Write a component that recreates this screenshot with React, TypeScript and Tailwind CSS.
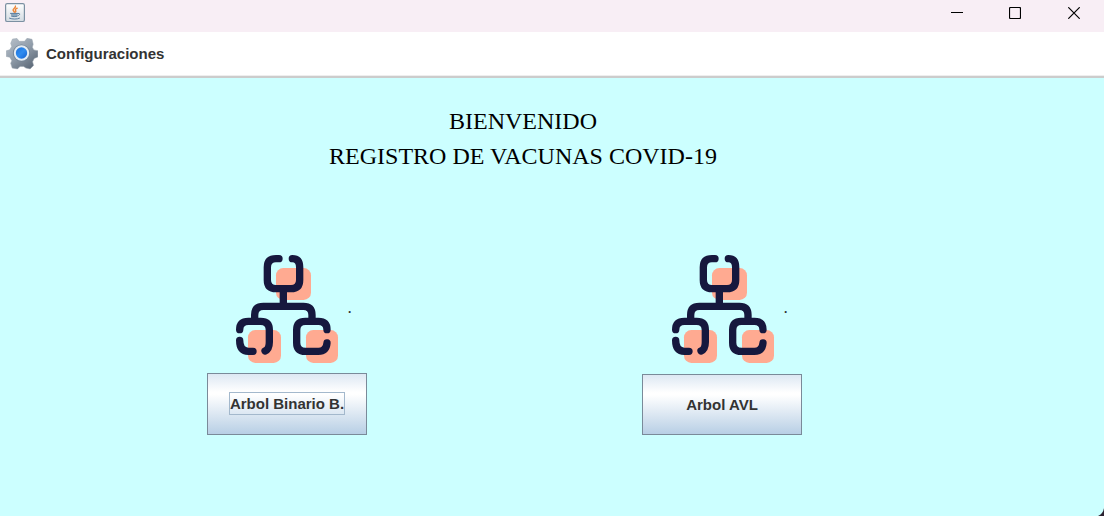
import React from "react";

function JavaIcon() {
  return (
    <svg width="20" height="20" viewBox="0 0 20 20" aria-hidden="true">
      <defs>
        <linearGradient id="java-face" x1="0" y1="0" x2="0" y2="1">
          <stop offset="0" stopColor="#ffffff" />
          <stop offset="1" stopColor="#d3dbe2" />
        </linearGradient>
      </defs>
      <rect x="0.6" y="0.6" width="18.8" height="17.900" rx="1.600" fill="url(#java-face)" stroke="#7b90a2" strokeWidth="1.200" />
      <path d="M10.400 3c1 1.700-2.900 2.600-2.300 4.300.3.800 1.100 1.200 1.300 1.900M12.200 5.200c-1.800.8-2.300 1.500-1.500 2.400.4.600.1 1.100-.4 1.500" fill="none" stroke="#ee8434" strokeWidth="1.400" strokeLinecap="round" />
      <path d="M5.500 10.300h7.500l-1 3.100q-2.700.8-5.300 0z" fill="#8ba5bb" />
      <path d="M5.500 10.400h7.600M6.600 13.200c1.600.6 3.700.6 5.400 0M13.200 10.500c2.300-.6 2.100 1.600-.3 2.200M4.500 15.200c3 1.200 7.500 1.200 10 0" fill="none" stroke="#5c7f9f" strokeWidth="1" strokeLinecap="round" />
    </svg>
  );
}

function GearIcon() {
  return (
    <svg width="32" height="32" viewBox="0 0 32 32" aria-hidden="true">
      <defs>
        <linearGradient id="gear-body" x1="0" y1="0" x2="0.8" y2="1">
          <stop offset="0" stopColor="#b9c2cc" />
          <stop offset="0.5" stopColor="#929eab" />
          <stop offset="1" stopColor="#5b6877" />
        </linearGradient>
        <linearGradient id="gear-core" x1="0" y1="0" x2="1" y2="1">
          <stop offset="0" stopColor="#1c6fd8" />
          <stop offset="0.5" stopColor="#2f8cf0" />
          <stop offset="1" stopColor="#1460cf" />
        </linearGradient>
      </defs>
      <path
        d="M6.500 1 11 .500l2.200 2.800h5.400L21 .300l5 1 1.200 5-.9 2.900 1.600 2.700 4 .8v6.200l-3.700 1.500-1.600 3.400 1 3.600-3.500 3.500-4.200-.8-2.300-1.700h-3.600l-2.500 2.500-5.300-.8-1.500-4.800 1.100-2.600-2-3.500L.300 18.500V12.800l3.400-1 2-3.300-1-3.200z"
        fill="url(#gear-body)"
        stroke="#99a4af"
        strokeWidth="0.500"
        strokeLinejoin="round"
      />
      <circle cx="15.500" cy="15" r="8.600" fill="#718294" />
      <circle cx="15.500" cy="15" r="7.700" fill="#e4ecf3" />
      <circle cx="15.500" cy="15" r="5.700" fill="url(#gear-core)" />
    </svg>
  );
}

function TreeIcon() {
  return (
    <svg width="105" height="110" viewBox="30 27 315 330" aria-hidden="true">
      <g fill="#ffaa91">
        <rect x="153" y="69" width="105" height="96" rx="22" />
        <rect x="69" y="255" width="99" height="99" rx="22" />
        <rect x="243" y="255" width="96" height="99" rx="22" />
      </g>
      <g fill="none" stroke="#16183e" strokeWidth="22" strokeLinecap="round" strokeLinejoin="round">
        <path d="M162 41h-9q-26 0-26 26v38q0 26 26 26h45q26 0 26-26V67q0-26-22-26" />
        <path d="M175 131v53M89 229v-19q0-26 26-26h120q26 0 26 26v19" />
        <path d="M44 254q0-25 26-25h37q26 0 26 26v36q0 22-13 27M84 319H70q-26 0-26-33" />
        <path d="M306 254q0-25-26-25h-39q-26 0-26 26v38q0 26 26 26h39q24 0 26-25" />
      </g>
    </svg>
  );
}

const buttonFace =
  "w-full border border-[#7a8a99] bg-[linear-gradient(180deg,#dde8f3_0%,#ffffff_30%,#ffffff_34%,#b8cfe5_100%)] text-[15px] leading-5 font-bold text-[#333333] outline-none";

export default function App() {
  return (
    <div className="relative flex min-h-screen flex-col bg-[#ccffff] font-['Liberation_Sans',Arial,sans-serif]">
      <header className="flex h-8 items-start justify-between bg-[#f8eef5]">
        <div className="pt-[3px] pl-[5px]">
          <JavaIcon />
        </div>
        <div className="flex">
          <button type="button" aria-label="Minimizar" className="flex h-[26px] w-[58px] items-center justify-center">
            <svg width="12" height="12" viewBox="0 0 12 12" aria-hidden="true">
              <path d="M0 5.500h12" stroke="#000" />
            </svg>
          </button>
          <button type="button" aria-label="Maximizar" className="flex h-[26px] w-[58px] items-center justify-center">
            <svg width="12" height="12" viewBox="0 0 12 12" aria-hidden="true">
              <rect x="0.500" y="0.500" width="11" height="11" rx="1" fill="none" stroke="#000" strokeWidth="1.200" />
            </svg>
          </button>
          <button type="button" aria-label="Cerrar" className="flex h-[26px] w-[60px] items-center justify-center">
            <svg width="12" height="12" viewBox="0 0 12 12" aria-hidden="true">
              <path d="M0.300 0.300l11.400 11.400M11.700 0.300L0.300 11.700" stroke="#000" strokeWidth="1.200" />
            </svg>
          </button>
        </div>
      </header>

      <nav className="border-b-2 border-[#cccccc] bg-white">
        <div className="flex h-11 items-center border-b border-[#eeeeee] pl-[6px]">
          <button type="button" className="flex items-center gap-2 text-[15px] leading-5 font-bold text-[#333333]">
            <GearIcon />
            Configuraciones
          </button>
        </div>
      </nav>

      <main className="flex flex-1 flex-col pt-[26px] pr-[58px]">
        <h1 className="text-center font-['Liberation_Serif',serif] text-2xl leading-[35px] text-black">
          BIENVENIDO
          <br />
          REGISTRO DE VACUNAS COVID-19
        </h1>

        <div className="flex justify-center gap-[275px] pt-20 pr-[37px]">
          <section className="w-40">
            <div className="flex items-center gap-2 pl-7 text-[12px] font-bold text-[#333333]">
              <TreeIcon />
              <span>.</span>
            </div>
            <button type="button" className={`${buttonFace} mt-[9px] h-[62px]`}>
              <span className="border border-[#a3b8cc] py-[2px]">Arbol Binario B.</span>
            </button>
          </section>
          <section className="w-40">
            <div className="flex items-center gap-2 pl-[29px] text-[12px] font-bold text-[#333333]">
              <TreeIcon />
              <span>.</span>
            </div>
            <button type="button" className={`${buttonFace} mt-[10px] h-[61px]`}>
              Arbol AVL
            </button>
          </section>
        </div>
      </main>
      <svg className="absolute right-0 bottom-0" width="6" height="8" viewBox="0 0 6 8" aria-hidden="true">
        <path d="M6 0v8H0Q5 6 6 0z" fill="#2b2230" />
      </svg>
    </div>
  );
}
